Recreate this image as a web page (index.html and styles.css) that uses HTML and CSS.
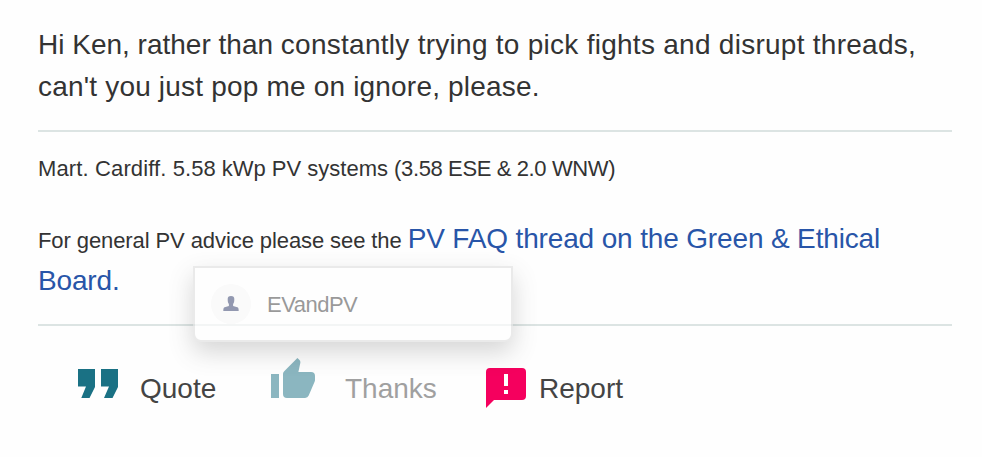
FILE: index.html
```html
<!DOCTYPE html>
<html lang="en">
  <head>
    <meta charset="utf-8">
    <title>Forum post</title>
    <link rel="stylesheet" href="styles.css">
  </head>
  <body>
    <div class="post">
      <div class="message">
        Hi Ken, rather than <span class="message-rest">constantly trying to pick fights and disrupt threads,</span><br>
        <span class="message-second">can't you just pop me on ignore, please.</span>
      </div>

      <div class="signature">
        <p class="signature-line"><span class="owner">Mart. Cardiff. </span>5.58 kWp PV systems <span class="arrays">(3.58 ESE &amp; 2.0 WNW)</span></p>
        <p class="signature-faq"><span class="advice">For general PV advice please see the </span><a class="faq-link" href="#">PV FAQ thread on the Green &amp; Ethical<br>Board.</a></p>
      </div>

      <div class="reactions">
        <a class="reaction quote" href="#">
          <svg width="40" height="29" viewBox="0 0 40 29"><path fill="#1a7184" d="M0 0h17v18L11.500 29H3.300L8 17.500H0zM23 0h17v18L34.500 29H26L31 17.500h-8z"/></svg>
          <span>Quote</span>
        </a>
        <a class="reaction thanks" href="#">
          <svg width="44" height="40" viewBox="0 0 44 40"><path fill="#1a7184" d="M0 16h8v24H0zM44 18a4 4 0 0 0-4-4H27.400l1.900-9.100.1-.700a3 3 0 0 0-.9-2.100L26.400 0 13.200 13.200A4 4 0 0 0 12 16v20a4 4 0 0 0 4 4h18a4 4 0 0 0 3.700-2.400l6-14.100A4 4 0 0 0 44 22z"/></svg>
          <span>Thanks</span>
        </a>
        <a class="reaction report" href="#">
          <svg width="40" height="40" viewBox="0 0 40 40"><path fill="#f5005e" d="M4 0h32a4 4 0 0 1 4 4v24a4 4 0 0 1-4 4H8l-8 8V4a4 4 0 0 1 4-4z"/><path fill="#fff" d="M18 6h4v12h-4zM18 22h4v4h-4z"/></svg>
          <span>Report</span>
        </a>
      </div>

      <!-- People who thanked the post -->
      <div class="flyout">
        <span class="avatar">
          <svg width="16" height="16" viewBox="0 0 16 16"><path fill="#5b6488" d="M8 0c2.400 0 3.300 1 3.300 3 0 2.300-.2 3.800-1.200 5v2l4.200 1.200c1 .3 1.400 1.300 1.400 3.800H.3c0-2.500.4-3.500 1.400-3.800L5.900 10V8c-1-1.200-1.200-2.700-1.200-5 0-2 .9-3 3.300-3z"/></svg>
        </span>
        <span class="flyout-name">EVandPV</span>
      </div>
    </div>
  </body>
</html>
```
FILE: styles.css
```css
body {
  margin: 0;
  background: #fefefe;
  color: #333;
  font-family: "Liberation Sans", Arial, sans-serif;
}

a {
  text-decoration: none;
}

.post {
  position: relative;
  padding: 24px 30px 0 38px;
}

.message {
  padding-bottom: 22px;
  border-bottom: 2px solid #dce4e3;
  font-size: 28px;
  line-height: 42px;
  white-space: nowrap;
}

.message-rest {
  letter-spacing: 0.27px;
}

.message-second {
  letter-spacing: 0.19px;
}

.signature {
  padding: 19px 0 22px;
  border-bottom: 2px solid #dce4e3;
  white-space: nowrap;
}

.signature-line {
  margin: 0 0 31px;
  font-size: 22px;
  line-height: 36px;
}

.owner {
  letter-spacing: 0.13px;
}

.arrays {
  letter-spacing: -0.38px;
}

.signature-faq {
  margin: 0;
  font-size: 28px;
  line-height: 42px;
}

.advice {
  font-size: 22px;
  letter-spacing: -0.09px;
  line-height: 1;
}

.faq-link {
  color: #2855a8;
  letter-spacing: -0.15px;
}

.reactions {
  display: flex;
  padding: 32px 0 0 40px;
}

.reaction {
  display: flex;
  align-items: flex-start;
  color: #444;
  font-size: 28px;
  line-height: 32px;
}

.reaction span {
  padding-top: 15px;
}

.reaction svg {
  display: block;
}

.quote {
  width: 193px;
  gap: 22px;
}

.quote svg {
  margin-top: 11px;
}

.thanks {
  width: 215px;
  gap: 30px;
  opacity: 0.5;
}

.report {
  gap: 13px;
}

.report svg {
  margin-top: 10px;
}

.flyout {
  position: absolute;
  top: 266px;
  left: 193px;
  display: flex;
  align-items: center;
  box-sizing: border-box;
  width: 320px;
  height: 76px;
  padding-left: 16px;
  border: 2px solid #e0e0e0;
  border-radius: 0 0 8px 8px;
  background: #fff;
  background-clip: padding-box;
  box-shadow: 0 10px 24px rgba(0, 0, 0, 0.24);
  opacity: 0.66;
}

.avatar {
  display: flex;
  align-items: center;
  justify-content: center;
  width: 40px;
  height: 40px;
  margin-right: 16px;
  border-radius: 50%;
  background: #f8f8f8;
}

.flyout-name {
  padding-top: 2px;
  color: #666;
  font-size: 22px;
  letter-spacing: -0.5px;
}
```
